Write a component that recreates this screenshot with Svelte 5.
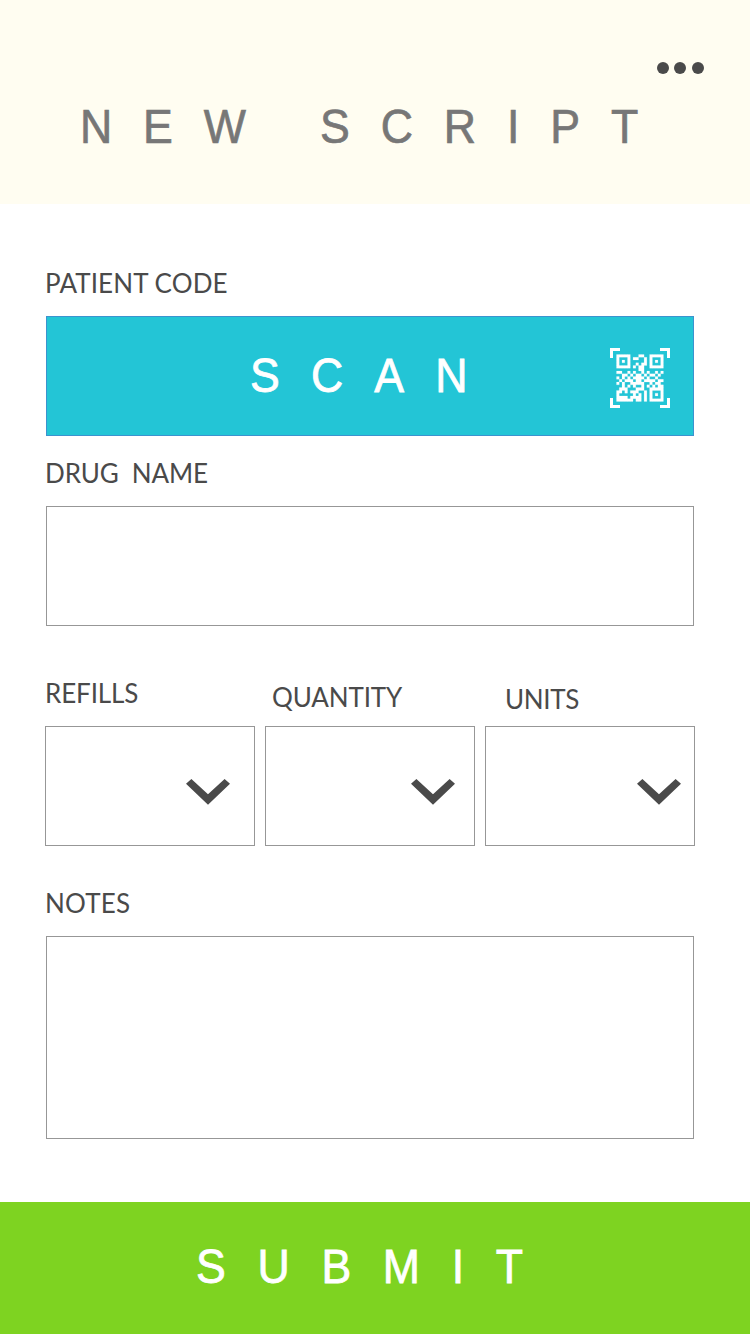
<script>
  const qr = [
    '11111000110011111',
    '10001011001010001',
    '10101000001010101',
    '10001001011010001',
    '11111010110011111',
    '00000000110000000',
    '11001010010100101',
    '00110101101011010',
    '10101011110100100',
    '01011101101111011',
    '10100111110010110',
    '00101010010101011',
    '01110001110011111',
    '11010111001010001',
    '10000010101010101',
    '11110111101010001',
    '11111101101011111'
  ];
  const path = qr
    .flatMap((row, y) => [...row].map((v, x) => (v === '1' ? `M${x} ${y}h1v1h-1z` : '')))
    .join('');
  const selects = [
    { label: 'REFILLS', name: 'refills' },
    { label: 'QUANTITY', name: 'quantity' },
    { label: 'UNITS', name: 'units' }
  ];
</script>

<div class="screen">
  <header>
    <svg class="more" width="48" height="12" viewBox="0 0 48 12"><circle cx="6" cy="6" r="6" /><circle cx="23" cy="6" r="6" /><circle cx="41" cy="6" r="6" /></svg>
    <h1>NEW SCRIPT</h1>
  </header>
  <main>
    <div class="label patient">PATIENT CODE</div>
    <button class="scan">
      <span class="wide">SCAN</span>
      <svg class="code" width="60" height="60" viewBox="0 0 60 60">
        <path d="M1.5 10V1.5H10M50 1.5H58.5V10M58.5 50V58.5H50M10 58.5H1.5V50" fill="none" stroke="#fff" stroke-width="3" />
        <path transform="translate(6.5 6.5) scale(2.76)" fill="#fff" stroke="#fff" stroke-width="0.06" d={path} />
      </svg>
    </button>
    <div class="label drug">DRUG&nbsp; NAME</div>
    <div class="box"></div>
    <div class="selects">
      {#each selects as s}
        <div class="field {s.name}">
          <div class="label {s.name}">{s.label}</div>
          <div class="select">
            <svg width="44" height="26" viewBox="0 0 44 26"><path d="M5.4 0L22 15.2L38.6 0L44 4.8L22 25.7L0 4.8Z" /></svg>
          </div>
        </div>
      {/each}
    </div>
    <div class="label notes">NOTES</div>
    <div class="box tall"></div>
  </main>
  <button class="submit"><span class="wide">SUBMIT</span></button>
</div>

<style>
  :global(body) { margin: 0; background: #fff; }
  .screen { width: 750px; height: 1334px; display: flex; flex-direction: column; background: #fff; }
  header { height: 204px; box-sizing: border-box; padding: 62px 45px 0 80px; background: #fffdf1; display: flex; flex-direction: column; }
  .more { align-self: flex-end; fill: #4a4a4a; flex: none; }
  h1, .wide { font: 400 47.5px/56px "Liberation Sans", Arial, sans-serif; white-space: nowrap; transform: scaleX(0.94); transform-origin: 0 0; }
  h1 { margin: 25px 0 0; color: #777; letter-spacing: 32.85px; -webkit-text-stroke: 0.7px #777; }
  .wide { color: #fff; -webkit-text-stroke: 0.8px #fff; }
  .scan .wide { width: 260px; letter-spacing: 33.1px; }
  .submit .wide { letter-spacing: 33.7px; }
  main { flex: 1; padding: 62px 55px 0 45px; display: flex; flex-direction: column; }
  .label { font: 400 26px/40px Lato, "Open Sans", sans-serif; height: 40px; color: #4a4a4a; white-space: pre; letter-spacing: -0.12px; }
  button { border: 0; margin: 0; padding: 0; text-align: left; display: flex; box-sizing: border-box; }
  .patient { line-height: 34px; letter-spacing: 0.1px; }
  .scan { width: 648px; height: 120px; margin: 10px 0 0 1px; padding: 31px 23px 0 203px; border: 1px solid #3c93cf; background: #23c5d6; justify-content: space-between; flex: none; }
  .code { flex: none; }
  .drug { margin-top: 17px; }
  .box { width: 648px; height: 120px; margin: 13px 0 0 1px; border: 1px solid #979797; box-sizing: border-box; flex: none; }
  .selects { display: grid; grid-template-columns: repeat(3, 210px); gap: 10px; margin-top: 47px; height: 173px; }
  .field { display: flex; flex-direction: column; justify-content: space-between; }
  .select { height: 120px; border: 1px solid #979797; box-sizing: border-box; display: flex; justify-content: flex-end; padding: 52px 24px 0 0; }
  .select svg { fill: #4a4a4a; }
  .quantity .select { padding-right: 19px; }
  .units .select { padding-right: 13px; }
  .label.quantity { padding: 4px 0 0 7px; }
  .label.units { padding: 6px 0 0 20px; letter-spacing: -0.3px; }
  .notes { margin-top: 37px; letter-spacing: 0.2px; }
  .tall { height: 203px; }
  .submit { height: 132px; flex: none; background: #7ed321; padding: 37px 0 0 196px; }
</style>
